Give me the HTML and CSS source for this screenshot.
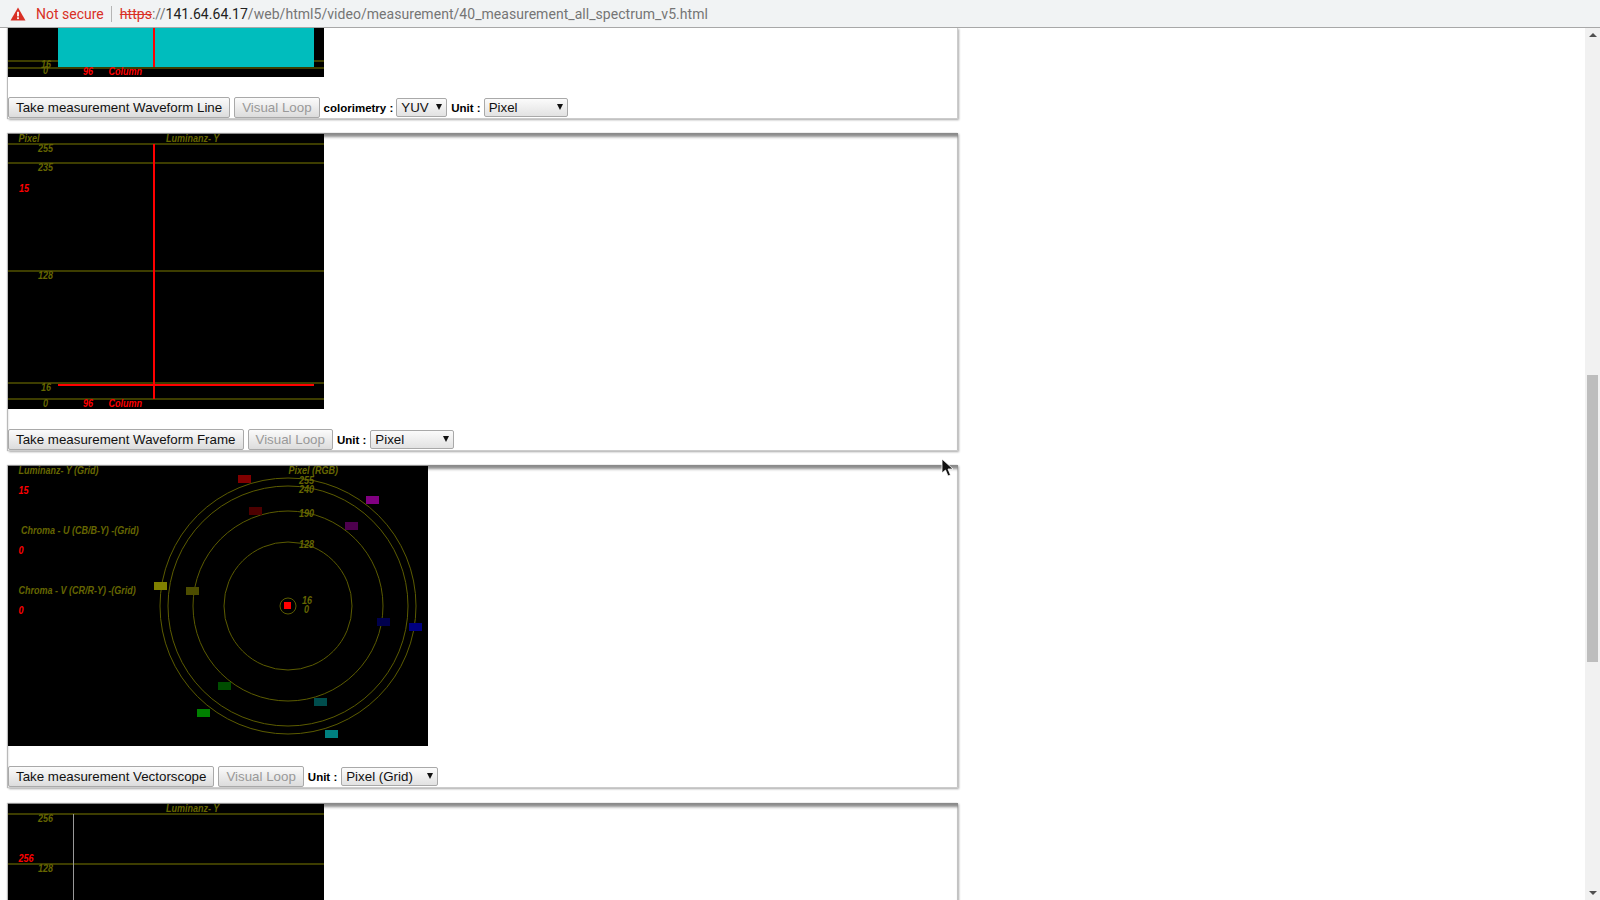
FILE: index.html
```html
<!DOCTYPE html>
<html lang="en">
<head>
  <meta charset="UTF-8">
  <title>All spectrum measurement</title>
  <link rel="stylesheet" href="styles.css">
</head>
<body>
  <!-- Browser address bar -->
  <div class="addressbar">
    <svg class="warn-icon" width="16" height="14" viewBox="0 0 16 14">
      <path d="M8 0.5 L15.5 13.5 L0.5 13.5 Z" fill="#d93025"/>
      <rect x="7.1" y="4.8" width="1.8" height="4.6" fill="#fff"/>
      <rect x="7.1" y="10.3" width="1.8" height="1.8" fill="#fff"/>
    </svg>
    <span class="not-secure">Not secure</span>
    <span class="divider"></span>
    <span class="url"><span class="scheme">https</span><span class="path">://</span><span class="host">141.64.64.17</span><span class="path">/web/html5/video/measurement/40_measurement_all_spectrum_v5.html</span></span>
  </div>

  <div class="viewport">
    <div class="content">

      <!-- Waveform line (scrolled partly out of view) -->
      <div class="panel">
        <svg class="scope" width="316" height="49" viewBox="0 0 316 49">
          <rect class="trace-fill" x="50" y="0" width="256" height="39"/>
          <rect class="grid" x="0" y="32" width="50" height="2"/>
          <rect class="grid" x="306" y="32" width="10" height="2"/>
          <rect class="grid" x="0" y="39" width="316" height="2"/>
          <rect class="marker" x="145" y="0" width="2" height="39"/>
          <text class="label" x="33" y="40">16</text>
          <text class="label" x="35" y="46">0</text>
          <text class="value" x="75" y="47">96</text>
          <text class="value" x="100.500" y="47">Column</text>
        </svg>
        <div class="controls">
          <button class="btn">Take measurement Waveform Line</button>
          <button class="btn" disabled>Visual Loop</button>
          <label class="field-label">colorimetry :</label>
          <span class="select-wrap"><select class="select select-yuv"><option>YUV</option></select></span>
          <label class="field-label">Unit :</label>
          <span class="select-wrap"><select class="select select-unit"><option>Pixel</option></select></span>
        </div>
      </div>

      <!-- Waveform frame -->
      <div class="panel">
        <svg class="scope" width="316" height="275" viewBox="0 0 316 275">
          <rect class="grid" x="0" y="9" width="316" height="2"/>
          <rect class="grid" x="0" y="28" width="316" height="2"/>
          <rect class="grid" x="0" y="136" width="316" height="2"/>
          <rect class="grid" x="0" y="248" width="316" height="2"/>
          <rect class="grid" x="0" y="264" width="316" height="2"/>
          <rect class="marker" x="145" y="10" width="2" height="255"/>
          <rect class="marker" x="50" y="250" width="256" height="2"/>
          <text class="label" x="10.500" y="8">Pixel</text>
          <text class="label" x="158" y="8">Luminanz- Y</text>
          <text class="label" x="30" y="18">255</text>
          <text class="label" x="30" y="37">235</text>
          <text class="label" x="30" y="145">128</text>
          <text class="label" x="33" y="257">16</text>
          <text class="label" x="35" y="273">0</text>
          <text class="value" x="11" y="58">15</text>
          <text class="value" x="75" y="273">96</text>
          <text class="value" x="100.500" y="273">Column</text>
        </svg>
        <div class="controls">
          <button class="btn">Take measurement Waveform Frame</button>
          <button class="btn" disabled>Visual Loop</button>
          <label class="field-label">Unit :</label>
          <span class="select-wrap"><select class="select select-unit"><option>Pixel</option></select></span>
        </div>
      </div>

      <!-- Vectorscope -->
      <div class="panel panel-vector">
        <svg class="scope" width="420" height="280" viewBox="0 0 420 280">
          <circle class="ring" cx="280" cy="140" r="8"/>
          <circle class="ring" cx="280" cy="140" r="64"/>
          <circle class="ring" cx="280" cy="140" r="95"/>
          <circle class="ring" cx="280" cy="140" r="120"/>
          <circle class="ring" cx="280" cy="140" r="128"/>
          <rect x="230" y="9" width="13" height="8" fill="#800000"/>
          <rect x="241" y="41" width="13" height="8" fill="#4d0000"/>
          <rect x="358" y="30" width="13" height="8" fill="#800080"/>
          <rect x="337" y="56" width="13" height="8" fill="#4d004d"/>
          <rect x="146" y="116" width="13" height="8" fill="#808000"/>
          <rect x="178" y="121" width="13" height="8" fill="#4d4d00"/>
          <rect x="369" y="152" width="13" height="8" fill="#00004d"/>
          <rect x="401" y="157" width="13" height="8" fill="#000080"/>
          <rect x="210" y="216" width="13" height="8" fill="#004d00"/>
          <rect x="189" y="243" width="13" height="8" fill="#008000"/>
          <rect x="306" y="232" width="13" height="8" fill="#004d4d"/>
          <rect x="317" y="264" width="13" height="8" fill="#008080"/>
          <rect class="marker" x="276" y="136" width="7" height="7"/>
          <text class="label" x="10.500" y="8">Luminanz- Y (Grid)</text>
          <text class="label" x="280.500" y="8">Pixel (RGB)</text>
          <text class="label" x="291" y="18">255</text>
          <text class="label" x="291" y="27">240</text>
          <text class="label" x="291" y="51">190</text>
          <text class="label" x="291" y="82">128</text>
          <text class="label" x="294" y="138">16</text>
          <text class="label" x="296" y="147">0</text>
          <text class="value" x="10.500" y="28">15</text>
          <text class="label" x="13" y="68">Chroma - U (CB/B-Y) -(Grid)</text>
          <text class="value" x="10.500" y="88">0</text>
          <text class="label" x="10.500" y="128">Chroma - V (CR/R-Y) -(Grid)</text>
          <text class="value" x="10.500" y="148">0</text>
        </svg>
        <div class="controls">
          <button class="btn">Take measurement Vectorscope</button>
          <button class="btn" disabled>Visual Loop</button>
          <label class="field-label">Unit :</label>
          <span class="select-wrap"><select class="select select-grid"><option>Pixel (Grid)</option></select></span>
        </div>
      </div>

      <!-- Histogram (cut off by the window) -->
      <div class="panel">
        <svg class="scope" width="316" height="275" viewBox="0 0 316 275">
          <rect class="grid" x="0" y="9" width="316" height="2"/>
          <rect class="grid" x="0" y="59" width="316" height="2"/>
          <rect class="cursor-line" x="65" y="10" width="1" height="265"/>
          <text class="label" x="158" y="8">Luminanz- Y</text>
          <text class="label" x="30" y="18">256</text>
          <text class="label" x="30" y="68">128</text>
          <text class="value" x="10.500" y="58">256</text>
        </svg>
        <div class="controls"></div>
      </div>

    </div>

    <!-- Fake scrollbar -->
    <div class="scrollbar">
      <span class="arrow arrow-up"></span>
      <div class="track"><div class="thumb"></div></div>
      <span class="arrow arrow-down"></span>
    </div>

    <svg class="mouse" width="14" height="20" viewBox="0 0 14 20">
      <path d="M1 1 L1 15 L4.500 12 L7 18 L9.500 17 L7 11 L12 11 Z" fill="#111" stroke="#fff" stroke-width="0.8"/>
    </svg>
  </div>
</body>
</html>
```

FILE: styles.css
```css
/* General Styles */
html, body {
  margin: 0;
  height: 100%;
  overflow: hidden;
}

body {
  font-family: "Liberation Sans", Arial, sans-serif;
  background-color: #fff;
  color: #000;
  display: flex;
  flex-direction: column;
}

/* Address bar */
.addressbar {
  height: 27px;
  flex-shrink: 0;
  display: flex;
  align-items: center;
  padding-left: 10px;
  background-color: #f1f3f4;
  border-bottom: 1px solid #a8a8a8;
  font-family: Roboto, sans-serif;
  font-size: 14px;
  white-space: nowrap;
}

.warn-icon {
  margin-right: 10px;
}

.not-secure {
  color: #d93025;
}

.divider {
  width: 1px;
  height: 16px;
  background-color: #b5b5b5;
  margin: 0 8px 0 7px;
}

.url {
  letter-spacing: 0.04px;
}

.scheme {
  color: #d93025;
  text-decoration: line-through;
}

.host {
  color: #222;
}

.path {
  color: #757575;
}

/* Page area */
.viewport {
  flex: 1;
  min-height: 0;
  display: flex;
  position: relative;
  overflow: hidden;
}

.content {
  flex: 1;
  min-width: 0;
  padding-left: 8px;
}

.panel {
  width: 950px;
  margin-bottom: 14px;
  border-bottom: 1px solid #ccc;
  box-shadow: inset 0 5px 3px -1px #8a8a8a, inset -1px 0 0 #ccc, 1px 1px 2px #aaa, -1px 0 1px #bbb;
  padding-top: 1px;
}

.panel:first-child {
  padding-top: 0;
  box-shadow: inset -1px 0 0 #ccc, 1px 1px 2px #aaa, -1px 0 1px #bbb;
}

.scope {
  display: block;
  background-color: #000;
  position: relative;
}

.grid {
  fill: #3d3d00;
}

.marker {
  fill: #f00;
}

.trace-fill {
  fill: #00bdbd;
}

.cursor-line {
  fill: #999;
}

.ring {
  fill: none;
  stroke: #5c5c00;
  stroke-width: 1;
}

/* canvas text in the reference is a bit squeezed sideways */
.label, .value {
  font-family: "Liberation Sans", Arial, sans-serif;
  font-size: 10px;
  font-style: italic;
  font-weight: bold;
  transform-box: fill-box;
  transform-origin: 0 50%;
  transform: scaleX(0.9);
}

.label {
  fill: #666600;
}

.value {
  fill: #f00;
}

/* Controls under each scope */
.controls {
  display: flex;
  align-items: center;
  height: 21px;
  margin-top: 20px;
}

.panel-vector {
  margin-bottom: 15px;
}

.btn {
  height: 21px;
  padding: 0 7px;
  margin-right: 4px;
  border: 1px solid #a9a9a9;
  border-radius: 2px;
  background: linear-gradient(#fbfbfb, #dcdcdc);
  font-family: "Liberation Sans", Arial, sans-serif;
  font-size: 13.333px;
  color: #111;
}

.btn:disabled {
  color: #999;
}

.field-label {
  font-size: 11.5px;
  font-weight: bold;
  margin-right: 3px;
}

.btn + .field-label {
  margin-right: 4px;
}

.select-wrap {
  position: relative;
  display: inline-block;
  margin-right: 4px;
  height: 19px;
}

.select-wrap::after {
  content: "";
  position: absolute;
  right: 5px;
  top: 6px;
  border-left: 3px solid transparent;
  border-right: 3px solid transparent;
  border-top: 6px solid #111;
  pointer-events: none;
}

.select {
  appearance: none;
  display: block;
  height: 19px;
  padding: 0 0 0 4px;
  border: 1px solid #a9a9a9;
  border-radius: 2px;
  background: linear-gradient(#fbfbfb, #e2e2e2);
  font-family: "Liberation Sans", Arial, sans-serif;
  font-size: 13.333px;
  color: #111;
}

.select-yuv {
  width: 51px;
  margin-left: -1px;
}

.select-unit {
  width: 84px;
}

.select-grid {
  width: 97px;
}

/* Scrollbar */
.scrollbar {
  width: 15px;
  flex-shrink: 0;
  display: flex;
  flex-direction: column;
  align-items: center;
  background-color: #f1f1f1;
}

.arrow {
  flex-shrink: 0;
  width: 0;
  height: 0;
  border-left: 4px solid transparent;
  border-right: 4px solid transparent;
}

.arrow-up {
  margin: 5px 0 6px;
  border-bottom: 4px solid #505050;
}

.arrow-down {
  margin: 6px 0 5px;
  border-top: 4px solid #505050;
}

.track {
  flex: 1;
  width: 100%;
  padding-top: 332px;
  box-sizing: border-box;
}

.thumb {
  width: 11px;
  height: 287px;
  margin-left: 2px;
  background-color: #bdbdbd;
}

.mouse {
  position: absolute;
  left: 941px;
  top: 430px;
}
```
